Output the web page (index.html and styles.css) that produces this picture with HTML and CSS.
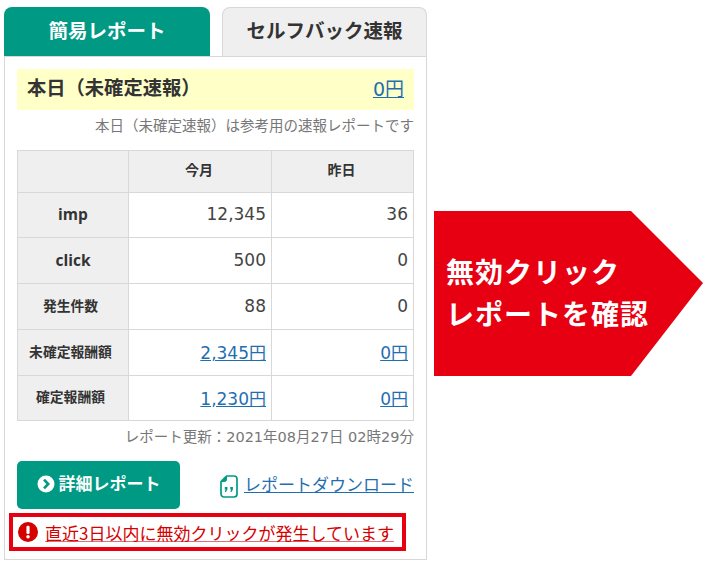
FILE: index.html
```html
<!DOCTYPE html>
<html lang="ja">
<head>
<meta charset="utf-8">
<title>簡易レポート</title>
<link rel="stylesheet" href="styles.css">
</head>
<body>
<main class="page">
  <section class="report">
    <div class="tabs">
      <div class="tab tab-active">簡易レポート</div>
      <div class="tab tab-idle">セルフバック速報</div>
    </div>
    <div class="panel">
      <div class="today">
        <strong class="today-label">本日（未確定速報）</strong>
        <a class="today-link" href="#">0円</a>
      </div>
      <p class="note">本日（未確定速報）は参考用の速報レポートです</p>
      <table class="stats">
        <colgroup><col class="c1"><col class="c2"><col class="c3"></colgroup>
        <tr class="r-head"><th></th><th>今月</th><th>昨日</th></tr>
        <tr class="r1"><th class="latin">imp</th><td>12,345</td><td>36</td></tr>
        <tr class="r2"><th class="latin">click</th><td>500</td><td>0</td></tr>
        <tr class="r3"><th class="jp">発生件数</th><td>88</td><td>0</td></tr>
        <tr class="r4"><th class="jp">未確定報酬額</th><td><a href="#">2,345円</a></td><td><a href="#">0円</a></td></tr>
        <tr class="r5"><th class="jp">確定報酬額</th><td><a href="#">1,230円</a></td><td><a href="#">0円</a></td></tr>
      </table>
      <p class="updated">レポート更新：2021年08月27日 02時29分</p>
      <div class="actions">
        <a class="detail-btn" href="#">
          <svg class="chev" width="18" height="18" viewBox="0 0 18 18"><circle cx="9" cy="9" r="8.5" fill="#fff"/><path d="M7 4.6 11.2 9 7 13.4" fill="none" stroke="#009a84" stroke-width="2.6"/></svg>
          <span>詳細レポート</span>
        </a>
        <div class="download">
          <svg class="file" width="18" height="23" viewBox="0 0 18 23"><path d="M6.5 1H14a3 3 0 0 1 3 3v15a3 3 0 0 1-3 3H4a3 3 0 0 1-3-3V6.500Z" fill="#fff" stroke="#009a84" stroke-width="1.700" stroke-linejoin="round"/><path d="M6.500 1.500V4.500a2 2 0 0 1-2 2H1.500" fill="#009a84" stroke="#009a84"/><path d="M4.800 12h2.600v2.500L6 17H4.900l.7-2.400h-.8ZM10.300 12h2.600v2.500L11.500 17h-1.100l.7-2.400h-.8Z" fill="#009a84"/></svg>
          <a href="#">レポートダウンロード</a>
        </div>
      </div>
      <div class="alert">
        <svg class="warn" width="20" height="20" viewBox="0 0 19 19"><circle cx="9.500" cy="9.500" r="9.500" fill="#d50000"/><rect x="8" y="3.600" width="3" height="7.800" rx="1.200" fill="#fff"/><circle cx="9.500" cy="14" r="1.700" fill="#fff"/></svg>
        <a href="#">直近3日以内に無効クリックが発生しています</a>
      </div>
    </div>
  </section>
  <aside class="arrow">
    <span>無効クリック</span>
    <span>レポートを確認</span>
  </aside>
</main>
</body>
</html>
```
FILE: styles.css
```css
* { box-sizing: border-box; }
html, body { margin: 0; background: #fff; }
body {
  font-family: "DejaVu Sans", "Noto Sans CJK JP", sans-serif;
  color: #333;
  height: 579px;
  overflow: hidden;
}
.page { display: flex; align-items: flex-start; padding: 7px 0 0 4px; }
.report { width: 423px; flex: none; }

.tabs { display: flex; justify-content: space-between; height: 49px; }
.tab {
  display: flex; align-items: center; justify-content: center;
  font-family: "Noto Sans CJK JP", sans-serif;
  font-size: 19.500px; font-weight: 700; border-radius: 8px 8px 0 0;
  padding-bottom: 5px;
}
.tab-active { width: 206px; background: #009a84; color: #fff; }
.tab-idle { width: 205px; background: #efefef; color: #333; border: 1px solid #d8d8d8; border-bottom: 0; }

.panel {
  height: 504px;
  border: 1px solid #d8d8d8;
  padding: 12px 12px 0;
}
.today {
  display: flex; align-items: center; justify-content: space-between;
  height: 41px; background: #ffffc8; padding: 0 10px 5px 10px;
}
.today-label { font-family: "Noto Sans CJK JP", sans-serif; font-size: 19.300px; font-weight: 700; }
.today-link { font-size: 19px; color: #1f6fb0; }
a { color: #1f6fb0; text-decoration: underline; }

.note, .updated {
  margin: 0; text-align: right; color: #777;
  line-height: 20px;
}
.note { margin-top: 5px; height: 35px; font-family: "Noto Sans CJK JP", sans-serif; font-size: 14.500px; }
.updated { margin-top: 6px; font-family: "DejaVu Sans", "Noto Sans CJK JP", sans-serif; font-size: 14.500px; height: 20px; }

.stats { width: 396px; border-collapse: collapse; table-layout: fixed; }
.c1 { width: 111px; } .c2 { width: 143px; } .c3 { width: 142px; }
.stats th, .stats td { border: 1px solid #d8d8d8; padding: 0; }
.stats th {
  background: #efefef; font-size: 13.500px; font-weight: 700; text-align: center;
  font-family: "Noto Sans CJK JP", sans-serif; color: #333; padding-bottom: 4px;
}
.stats th.jp { padding-right: 5px; font-size: 13.800px; }
.r-head th { font-size: 14px; padding: 0 2px 5px 0; }
.stats th.latin { font-family: "Open Sans", sans-serif; font-size: 15.500px; padding-bottom: 2px; }
.stats td { text-align: right; padding: 0 5px 2px 0; font-size: 17px; color: #444; background: #fff; }
.r-head { height: 42px; }
.r1 { height: 45px; } .r2 { height: 46px; } .r3 { height: 46px; } .r4 { height: 46px; } .r5 { height: 45px; }

.actions { display: flex; align-items: center; justify-content: space-between; margin-top: 14px; }
.detail-btn {
  display: flex; align-items: center; justify-content: center; gap: 4px;
  width: 163px; height: 48px; background: #009a84; border-radius: 5px;
  color: #fff; text-decoration: none; padding-bottom: 5px;
  font-family: "Noto Sans CJK JP", sans-serif; font-size: 17px; font-weight: 700;
}
.chev { flex: none; margin-top: 3px; }
.download { display: flex; align-items: center; gap: 6px; font-family: "Noto Sans CJK JP", sans-serif; font-size: 17px; line-height: 24px; }
.download a { position: relative; top: -1px; }
.file { flex: none; margin-top: 3px; }

.alert {
  display: flex; align-items: center; gap: 7px;
  width: 397px; height: 38px; margin: 4px 0 0 -8px;
  border: 4px solid #e60012; padding: 0 5px;
  font-family: "Noto Sans CJK JP", sans-serif; font-size: 17px;
}
.alert a { color: #d50000; white-space: nowrap; text-decoration-color: #e2707a; }
.warn { flex: none; }

.arrow {
  width: 269px; height: 165px; margin: 204px 0 0 7px; flex: none;
  background: #e60012; color: #fff;
  clip-path: polygon(0 0, 197px 0, 100% 72px, 197px 100%, 0 100%);
  display: flex; flex-direction: column; justify-content: center; gap: 0;
  padding: 0 0 4px 12px;
  font-family: "Noto Sans CJK JP", sans-serif; font-size: 28px; font-weight: 700; line-height: 42px; letter-spacing: 1px;
}
```
